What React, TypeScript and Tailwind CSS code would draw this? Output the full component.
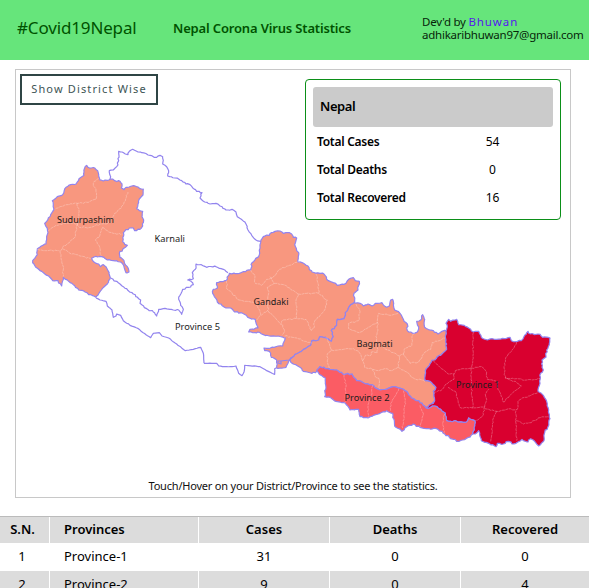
import React from "react";

// Outlines are listed as flat x/y pairs in thirds of a pixel from a local origin.
type Shape = { ox: number; oy: number; pts: string };

const noise = (x: number, y: number) => {
  const v = Math.sin(x * 12.9898 + y * 78.233) * 43758.5453;
  return v - Math.floor(v) - 0.5;
};

// Turns a shape into a path, adding a small bend to each long edge.
function trace({ ox, oy, pts }: Shape, closed: boolean, bend = 1.4) {
  const n = pts.trim().split(/[\s,]+/).map(Number);
  const p: [number, number][] = [];
  for (let i = 0; i < n.length; i += 2) p.push([ox + n[i] / 3, oy + n[i + 1] / 3]);
  if (closed) p.push(p[0]);
  let d = `M${p[0][0].toFixed(2)} ${p[0][1].toFixed(2)}`;
  for (let i = 1; i < p.length; i++) {
    const [ax, ay] = p[i - 1];
    const [bx, by] = p[i];
    const len = Math.hypot(bx - ax, by - ay);
    const steps = Math.max(1, Math.round(len / 2));
    for (let s = 1; s < steps; s++) {
      const x = ax + ((bx - ax) * s) / steps;
      const y = ay + ((by - ay) * s) / steps;
      const rx = Math.round(x * 10) / 10;
      const ry = Math.round(y * 10) / 10;
      d += `L${(x + noise(rx, ry) * bend).toFixed(2)} ${(y + noise(ry, rx) * bend).toFixed(2)}`;
    }
    d += `L${bx.toFixed(2)} ${by.toFixed(2)}`;
  }
  return closed ? d + "Z" : d;
}

const sudur: Shape = { ox: 20, oy: 140, pts: "200 76 204 82 214 84 224 84 233 92 236 108 240 120 250 123 262 121 272 117 284 122 300 124 306 132 304 144 312 149 318 142 345 138 354 141 360 146 370 147 369 165 358 177 354 192 350 206 358 212 368 214 366 230 371 240 368 258 360 268 344 272 340 264 328 264 310 278 308 305 314 313 322 316 308 328 298 340 300 352 312 362 322 380 327 396 318 398 313 384 302 366 290 362 280 362 262 360 245 350 228 349 215 355 222 366 236 372 242 380 250 374 258 380 264 392 271 413 262 432 244 450 228 472 216 466 206 464 190 452 176 450 160 434 146 424 130 412 125 438 114 422 98 422 86 408 60 392 44 376 38 362 52 344 52 326 64 318 78 312 80 298 84 278 80 262 74 250 84 238 92 224 102 208 97 182 112 170 128 164 138 142 152 134 168 132 180 114 192 106 194 84" };
const karnali: Shape = { ox: 100, oy: 140, pts: "30 118 32 110 28 92 40 90 50 80 56 62 56 34 66 36 76 42 84 44 88 34 98 28 110 34 125 38 150 46 170 52 180 46 188 50 188 72 200 80 206 92 203 108 225 114 245 122 258 132 270 134 290 154 306 158 300 174 314 186 330 192 348 190 360 198 378 210 396 208 408 216 412 230 424 238 438 252 444 270 455 286 468 300 486 308" };
const karnaliSouth: Shape = { ox: 90, oy: 240, pts: "62 114 80 124 100 140 130 162 152 180 150 190 170 206 190 216 200 228 206 208 220 206 250 210 266 210 275 223 280 208 272 196 266 178 270 166 278 148 296 142 310 134 303 124 293 120 310 116 307 98 316 88 318 72 334 74 350 82 378 80 400 88 414 98" };
const province5Line: Shape = { ox: 90, oy: 240, pts: "18 174 30 180 48 184 52 198 66 210 70 232 78 228 80 222 92 226 100 242 120 256 145 266 168 284 182 293 190 280 208 278 216 288 236 294 260 312 286 332 310 328 332 322 340 340 342 370" };
const province5South: Shape = { ox: 200, oy: 220, pts: "12 430 35 430 50 430 56 438 80 440 96 440 108 438 116 460 126 467 132 456 134 436 180 440 200 452 224 463 224 446 232 442" };
const gandaki: Shape = { ox: 200, oy: 220, pts: "182 68 190 50 208 46 214 38 240 33 250 40 262 38 275 42 280 52 290 54 284 74 290 92 296 98 294 126 306 128 324 138 336 156 360 160 372 162 385 182 400 188 412 196 438 190 446 178 460 173 466 182 478 184 474 210 462 220 464 246 452 254 436 278 432 296 412 298 410 316 394 332 400 350 394 364 376 352 360 350 356 360 336 362 332 376 316 386 300 396 284 404 270 420 258 442 230 444 230 420 214 412 208 394 194 392 192 384 222 382 248 378 256 354 234 348 208 348 190 344 180 338 146 336 150 328 174 324 166 298 148 294 124 278 104 276 92 264 78 264 52 246 38 220 40 208 52 204 50 188 78 182 88 160 118 160 152 150 156 128 178 104 180 80" };
const bagmati: Shape = { ox: 300, oy: 280, pts: "162 68 180 70 190 78 204 72 216 78 226 70 246 68 260 82 268 78 272 60 278 58 284 90 300 100 310 118 322 132 322 152 338 160 352 156 356 146 350 124 362 120 368 104 374 118 374 142 390 150 400 152 414 162 426 154 438 152 438 180 440 208 430 218 412 230 394 246 376 272 376 302 390 304 408 322 400 334 404 362 394 372 378 384 356 362 334 354 320 334 304 326 284 320 256 328 236 328 216 314 170 302 156 282 128 282 110 270 84 266 60 260 50 274 36 280 10 274 0 262 -28 246 -30 240 -16 224 0 216 16 206 32 196 36 182 56 180 60 170 76 172 94 184 100 170 94 152 110 136 112 118 132 116 136 98 152 74" };
const province2: Shape = { ox: 300, oy: 280, pts: "60 260 84 266 110 270 128 282 156 282 170 302 216 314 236 328 256 328 284 320 304 326 320 334 334 354 356 362 378 384 388 384 404 378 422 388 436 400 440 422 470 424 500 426 506 414 524 422 524 438 518 462 506 472 488 480 470 484 448 472 434 462 410 446 380 446 360 442 340 432 320 440 306 454 284 438 278 400 260 392 240 400 204 414 180 410 176 388 150 390 136 370 108 364 90 352 74 350 78 322 76 294 64 286 50 274" };
const province1: Shape = { ox: 410, oy: 300, pts: "108 94 112 80 108 70 116 58 122 64 140 58 146 74 162 76 176 84 190 96 206 94 214 112 232 120 246 116 260 118 284 116 300 112 304 122 322 124 334 122 344 106 354 94 362 102 384 102 398 112 420 114 418 130 410 150 408 172 396 180 396 202 400 210 392 220 390 250 384 274 400 286 410 304 416 330 420 356 414 380 404 398 402 422 386 438 374 424 362 416 354 426 336 418 318 430 306 432 296 424 280 432 262 430 258 440 236 430 214 422 206 392 196 402 188 402 194 378 194 362 176 354 170 366 140 364 110 362 106 340 92 328 74 318 58 324 48 322 70 310 74 302 70 274 78 262 60 244 46 242 46 212 64 186 82 170 100 158 110 148 108 120" };

const districts: Shape[] = [
  { ox: 20, oy: 140, pts: "236 115 220 130 228 155 228 178 210 184 190 190 172 190 140 194 104 208" },
  { ox: 20, oy: 140, pts: "172 190 176 220 172 250 120 252 98 262 84 274" },
  { ox: 20, oy: 140, pts: "172 250 166 290 148 308 128 322 120 332 128 375 130 410" },
  { ox: 20, oy: 140, pts: "52 328 84 332 118 332" },
  { ox: 20, oy: 140, pts: "128 326 150 340 180 348 212 356" },
  { ox: 20, oy: 140, pts: "172 250 178 262 210 262 240 252 264 250 284 220 304 204 316 182 324 156" },
  { ox: 20, oy: 140, pts: "248 262 262 272 280 280 308 282" },
  { ox: 20, oy: 140, pts: "248 262 240 285 226 300 240 325 244 348" },
  { ox: 200, oy: 220, pts: "152 150 164 164 166 190 184 196 200 178 220 170 238 148 264 138 284 128 300 126" },
  { ox: 200, oy: 220, pts: "80 182 80 206 92 214 112 238 140 244 160 246 174 260 182 286 170 300" },
  { ox: 200, oy: 220, pts: "210 170 222 190 202 202 206 220 200 250 206 268 184 286" },
  { ox: 200, oy: 220, pts: "222 190 256 196 274 210 294 222 288 250 290 278 290 296 248 300 244 314 220 288 204 272" },
  { ox: 200, oy: 220, pts: "294 222 320 220 356 220 354 190 348 162" },
  { ox: 200, oy: 220, pts: "356 220 382 240 374 270 362 284 344 302 342 324 334 332 318 298 290 296" },
  { ox: 200, oy: 220, pts: "248 314 254 334 246 346" },
  { ox: 200, oy: 220, pts: "254 348 290 354 318 364 336 370" },
  { ox: 300, oy: 280, pts: "168 72 180 94 176 122 146 130 146 146 162 152 178 158 210 140 232 126 236 100 270 106 296 100" },
  { ox: 300, oy: 280, pts: "78 172 88 190 94 210 82 222 82 246 88 264" },
  { ox: 300, oy: 280, pts: "94 210 130 208 160 206 178 218 188 242 194 262 218 268 224 284 238 300 238 326" },
  { ox: 300, oy: 280, pts: "232 126 234 150 228 170 232 192 252 202 262 210 298 228 294 262 276 272 254 266 236 272 218 268" },
  { ox: 300, oy: 280, pts: "188 242 196 226 210 228 214 216 232 218 232 202" },
  { ox: 300, oy: 280, pts: "298 228 310 222 330 250 356 246 372 220 392 208 396 188 418 182 436 174" },
  { ox: 300, oy: 280, pts: "310 222 316 204 336 196 336 170 344 160" },
  { ox: 300, oy: 280, pts: "294 262 320 276 340 294 374 304" },
  { ox: 300, oy: 280, pts: "132 284 138 320 134 370" },
  { ox: 300, oy: 280, pts: "218 316 212 350 206 370 204 412" },
  { ox: 300, oy: 280, pts: "296 326 284 350 272 370 272 394" },
  { ox: 300, oy: 280, pts: "310 332 316 360 312 400 308 446" },
  { ox: 300, oy: 280, pts: "360 376 370 400 366 420 360 442" },
  { ox: 300, oy: 280, pts: "434 402 428 430 432 460" },
  { ox: 410, oy: 300, pts: "190 98 188 130 190 160 184 204" },
  { ox: 410, oy: 300, pts: "70 182 90 202 114 222 132 222 136 212 160 206 184 204 216 200 230 216 232 238 264 246 264 268 272 282 280 306 296 292 308 278 334 258 316 244 286 234" },
  { ox: 410, oy: 300, pts: "320 126 304 154 288 172 282 200 286 234 350 240 390 236" },
  { ox: 410, oy: 300, pts: "132 222 132 238 108 252 92 272 72 276" },
  { ox: 410, oy: 300, pts: "114 262 136 274 144 300 152 324 188 324 224 320 230 298 226 284 236 268" },
  { ox: 410, oy: 300, pts: "184 204 184 250 186 290 188 324" },
  { ox: 410, oy: 300, pts: "224 320 220 344 204 360 196 362" },
  { ox: 410, oy: 300, pts: "224 326 260 334 290 328 322 328 324 304 344 292 384 278" },
  { ox: 410, oy: 300, pts: "260 334 248 360 246 400 242 426" },
  { ox: 410, oy: 300, pts: "318 332 318 370 320 422" },
  { ox: 410, oy: 300, pts: "318 362 340 372 364 368 384 354 416 350" },
];

const labels: [string, number, number, number][] = [
  ["Sudurpashim", 57, 223, 57],
  ["Karnali", 154.5, 242, 30.5],
  ["Province 5", 175, 330, 45],
  ["Gandaki", 253.5, 305, 35],
  ["Bagmati", 356.5, 347, 36],
  ["Province 2", 344.5, 401, 45],
  ["Province 1", 456, 388, 43.5],
];

function NepalMap() {
  return (
    <svg className="block h-[427px] w-[554px]" viewBox="16 70 554 427">
      <g stroke="#9284ee" strokeWidth="1.2" strokeLinejoin="round" fill="none">
        <path d={trace(karnali, false)} />
        <path d={trace(karnaliSouth, false)} />
        <path d={trace(province5Line, false, 0.5)} />
        <path d={trace(province5South, false, 0.5)} />
        <path d={trace(sudur, true)} fill="#f8977f" />
        <path d={trace(gandaki, true)} fill="#f8977f" />
        <path d={trace(bagmati, true)} fill="#f8977f" />
        <path d={trace(province1, true)} fill="#d9002f" />
        <path d={trace(province2, true)} fill="#fb5c64" />
        <path d="M278 361l3 0 0 3-3-1zM281 361l8-1 4-3" />
      </g>
      <g stroke="#ffffff" strokeOpacity="0.34" strokeWidth="0.8" strokeDasharray="3 0.6" fill="none">
        {districts.map((s, i) => (
          <path key={i} d={trace(s, false)} />
        ))}
      </g>
      <g fill="#1c1c1c" className="font-['Noto_Sans',sans-serif] text-[9.5px]">
        {labels.map(([t, x, y, w]) => (
          <text key={t} x={x} y={y} textLength={w} lengthAdjust="spacingAndGlyphs">
            {t}
          </text>
        ))}
      </g>
    </svg>
  );
}

const totals = [
  ["Total Cases", "54"],
  ["Total Deaths", "0"],
  ["Total Recovered", "16"],
];

const rows = [
  ["1", "Province-1", "31", "0", "0"],
  ["2", "Province-2", "9", "0", "4"],
];

const cols = "grid grid-cols-[49px_148px_130px_130px_128px] gap-x-px";

export default function App() {
  return (
    <div className="h-[588px] w-[589px] overflow-hidden bg-white font-['Noto_Sans',sans-serif] text-black">
      <header className="flex h-[60px] bg-[#66e57b] whitespace-nowrap text-[#005200]">
        <div className="w-[156px] pt-[14px] pl-[17px] text-[17px] leading-[27px] tracking-[-0.15px]">#Covid19Nepal</div>
        <h1 className="w-[266px] pt-[18px] pl-[17px] text-[13px] leading-5 font-semibold tracking-[-0.16px]">Nepal Corona Virus Statistics</h1>
        <div className="pt-[15px] text-[11.5px] leading-[13px] tracking-[-0.24px] text-[#06250a]">
          <div>
            Dev'd by <a className="tracking-[0.9px] text-[#5516ee]">Bhuwan</a>
          </div>
          <div>adhikaribhuwan97@gmail.com</div>
        </div>
      </header>

      <main className="relative mx-[15px] mt-[9px] h-[429px] w-[556px] border border-[#c8c8c8]">
        <NepalMap />
        <button className="absolute top-[4px] left-[4px] h-[31px] w-[138px] border-2 border-[#2f4545] bg-white text-[11px] tracking-[1.15px] whitespace-nowrap text-[#3d5454]">
          Show District Wise
        </button>
        <section className="absolute top-[9px] left-[289px] h-[141px] w-[256px] rounded-[4px] border border-[#0b8f18] bg-white p-[7px]">
          <h2 className="h-10 rounded-[3px] bg-[#cbcbcb] pl-[7px] text-[13px] leading-[39px] font-semibold tracking-[-0.4px]">Nepal</h2>
          {totals.map(([k, v]) => (
            <div key={k} className="flex h-7 items-center pt-px text-[12px]">
              <span className="w-[119px] pl-1 font-semibold whitespace-nowrap tracking-[-0.27px]">{k}</span>
              <span className="w-[121px] text-center">{v}</span>
            </div>
          ))}
        </section>
        <p className="absolute top-[407px] left-0 w-[554px] text-center text-[11px] leading-[18px] tracking-[-0.2px] text-[#111]">
          Touch/Hover on your District/Province to see the statistics.
        </p>
      </main>

      <div className="mt-[18px] text-[13px] whitespace-nowrap">
        <div className={`${cols} border-t border-[#bbb] leading-[25px] font-semibold *:h-[26px] *:bg-[#dcdcdc] *:text-center`}>
          <div className="pr-1">S.N.</div>
          <div className="pl-[14px] text-left!">Provinces</div>
          <div>Cases</div>
          <div>Deaths</div>
          <div>Recovered</div>
        </div>
        {rows.map((r, i) => (
          <div key={i} className={`${cols} leading-[27px] *:h-[28px] *:text-center ${i % 2 ? "*:bg-[#dcdcdc]" : ""}`}>
            <div className="pr-[5px]">{r[0]}</div>
            <div className="pl-[14px] text-left!">{r[1]}</div>
            <div>{r[2]}</div>
            <div>{r[3]}</div>
            <div>{r[4]}</div>
          </div>
        ))}
      </div>
    </div>
  );
}
